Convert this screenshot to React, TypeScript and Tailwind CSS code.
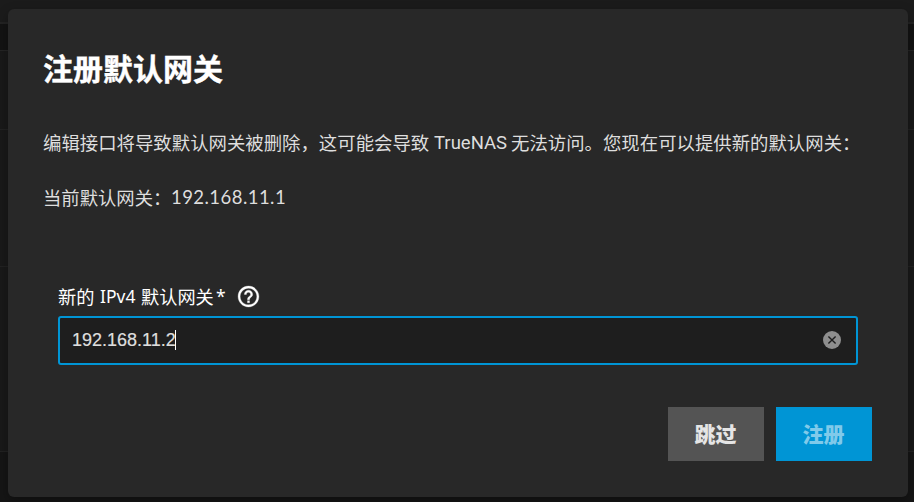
import React from "react";

const cjk = "font-['Noto_Sans_CJK_SC',sans-serif]";

export default function App() {
  return (
    <div className={`relative h-[502px] w-[914px] overflow-hidden bg-[#191919] ${cjk}`}>
      <div className="flex h-full flex-col">
        <div className="h-6 border-b-2 border-[#232323] bg-[#1b1b1b]" />
        <div className="h-[27px] border-b border-[#252525] bg-[#131313]" />
        <div className="h-[79px] border-b border-[#222222]" />
        <div className="h-[137px] border-b border-[#222222]" />
        <div className="h-[185px] border-b border-[#222222]" />
        <div className="flex-1 bg-[#151515]" />
      </div>

      <div
        role="dialog"
        className="absolute left-2 top-[9px] flex h-[488px] w-[900px] flex-col rounded-[6px] bg-[#282828] px-9 pt-[36px] shadow-[0_4px_12px_rgba(0,0,0,0.3)]"
      >
        <h1 className="-ml-px h-11 whitespace-nowrap text-[30px] font-bold leading-[44px] text-white [-webkit-text-stroke:0.4px_white]">
          注册默认网关
        </h1>

        <p className="-ml-px mt-[39px] flex h-7 whitespace-nowrap text-[18.4px] leading-7 text-[#dedede]">
          <span className="w-[391px]">编辑接口将导致默认网关被删除，这可能会导致</span>
          <span className="w-[77px] pt-px font-['Roboto',sans-serif] text-[18.5px]">TrueNAS</span>
          <span>无法访问。您现在可以提供新的默认网关：</span>
        </p>

        <p className="-ml-px mt-[27px] flex h-7 whitespace-nowrap text-[18.35px] leading-7 text-[#dedede]">
          <span className="w-32">当前默认网关：</span>
          <span className="font-['Lato',sans-serif] text-[18.5px] tracking-[0.45px]">192.168.11.1</span>
        </p>

        <div className="mt-[71px] flex h-7 items-center pl-[14px] text-[18.2px] text-white">
          <label className="flex whitespace-nowrap leading-7">
            <span className="w-[42px]">新的</span>
            <span className="w-[41px] font-['Noto_Sans',sans-serif] text-[17.5px]">IPv4</span>
            <span className="w-[75px]">默认网关</span>
            <span className="w-[20px] font-['Noto_Sans',sans-serif] text-[17.5px]">*</span>
          </label>
          <svg className="size-[25px]" viewBox="0 0 24 24" fill="currentColor" stroke="currentColor" strokeWidth="0.3">
            <path d="M11 18h2v-2h-2v2zm1-16C6.48 2 2 6.48 2 12s4.48 10 10 10 10-4.48 10-10S17.52 2 12 2zm0 18c-4.41 0-8-3.59-8-8s3.59-8 8-8 8 3.59 8 8-3.59 8-8 8zm0-14c-2.21 0-4 1.79-4 4h2c0-1.1.9-2 2-2s2 .9 2 2c0 2-3 1.75-3 5h2c0-2.25 3-2.5 3-5 0-2.21-1.79-4-4-4z" />
          </svg>
        </div>

        <div className="ml-[14px] mt-[6px] flex h-[49px] w-[800px] items-center rounded-[3px] border-2 border-[#0095d5] bg-[#1e1e1e] pb-[2px] pl-3 pr-[14px]">
          <span className="w-[103px] font-['Liberation_Sans',sans-serif] text-[18px] leading-5 text-[#dedede] [-webkit-text-stroke:0.2px_#dedede]">
            192.168.11.2
          </span>
          <span className="h-5 w-px bg-white" />
          <svg className="ml-auto size-[20px]" viewBox="0 0 20 20">
            <circle cx="10" cy="10" r="9" fill="#8e8e8e" />
            <path d="M6.4 6.4l7.2 7.2m0-7.2l-7.2 7.2" stroke="#1e1e1e" strokeWidth="1.4" />
          </svg>
        </div>

        <div className="mt-[42px] flex justify-end gap-3 text-[21px] font-black">
          <button className="h-[54px] w-24 bg-[#545454] pr-px text-[#e5e5e5]">跳过</button>
          <button className="h-[54px] w-24 bg-[#0095d5] pr-px text-[#80caea]">注册</button>
        </div>
      </div>
    </div>
  );
}
